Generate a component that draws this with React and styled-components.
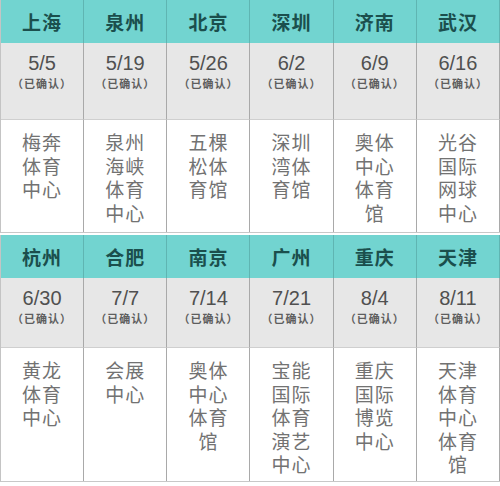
import React from 'react';
import styled, { createGlobalStyle } from 'styled-components';

const sections = [
  {
    dateHeight: 77,
    venueHeight: 112,
    items: [
      { city: '上海', date: '5/5', venue: ['梅奔', '体育', '中心'] },
      { city: '泉州', date: '5/19', venue: ['泉州', '海峡', '体育', '中心'] },
      { city: '北京', date: '5/26', venue: ['五棵', '松体', '育馆'] },
      { city: '深圳', date: '6/2', venue: ['深圳', '湾体', '育馆'] },
      { city: '济南', date: '6/9', venue: ['奥体', '中心', '体育', '馆'] },
      { city: '武汉', date: '6/16', venue: ['光谷', '国际', '网球', '中心'] },
    ],
  },
  {
    dateHeight: 70,
    venueHeight: 133,
    items: [
      { city: '杭州', date: '6/30', venue: ['黄龙', '体育', '中心'] },
      { city: '合肥', date: '7/7', venue: ['会展', '中心'] },
      { city: '南京', date: '7/14', venue: ['奥体', '中心', '体育', '馆'] },
      { city: '广州', date: '7/21', venue: ['宝能', '国际', '体育', '演艺', '中心'] },
      { city: '重庆', date: '8/4', venue: ['重庆', '国际', '博览', '中心'] },
      { city: '天津', date: '8/11', venue: ['天津', '体育', '中心', '体育', '馆'] },
    ],
  },
];

const App = () => {
  return (
    <>
      <GlobalStyle />
      <Page>
        {sections.map((section, i) => (
          <Section key={i}>
            {section.items.map(item => (
              <HeaderCell key={item.city}>{item.city}</HeaderCell>
            ))}
            {section.items.map(item => (
              <DateCell key={item.city} $height={section.dateHeight}>
                <DateText>{item.date}</DateText>
                <Status>（已确认）</Status>
              </DateCell>
            ))}
            {section.items.map(item => (
              <VenueCell key={item.city} $height={section.venueHeight}>
                <VenueText>{item.venue.join('\n')}</VenueText>
              </VenueCell>
            ))}
          </Section>
        ))}
      </Page>
    </>
  );
};

export default App;

const GlobalStyle = createGlobalStyle`
  body {
    margin: 0;
    background: #ffffff;
    font-family: "Noto Sans CJK SC", "Liberation Sans", sans-serif;
  }
`;

const Page = styled.div`
  width: 500px;
  height: 486px;
  background: #ffffff;
  display: flex;
  flex-direction: column;
  gap: 2px;
`;

const Section = styled.div`
  display: grid;
  grid-template-columns: repeat(6, 1fr);
  border-left: 1px solid #c4c4c4;
  border-bottom: 1px solid #c8c8c8;
`;

const HeaderCell = styled.div`
  height: 43px;
  box-sizing: border-box;
  display: flex;
  align-items: center;
  justify-content: center;
  background: #72d4d0;
  border-right: 1px solid #5fb5b2;
  color: #1b4f4d;
  font-size: 19px;
  font-weight: 700;
  letter-spacing: 1px;
`;

const DateCell = styled.div`
  height: ${p => p.$height}px;
  box-sizing: border-box;
  display: flex;
  flex-direction: column;
  align-items: center;
  padding-top: 8px;
  background: #e7e7e7;
  border-right: 1px solid #a9a9a9;
  border-bottom: 1px solid #cfcfcf;
`;

const DateText = styled.div`
  font-family: "Liberation Sans", "Noto Sans CJK SC", sans-serif;
  font-size: 20px;
  line-height: 24px;
  color: #505050;
`;

const Status = styled.div`
  font-size: 11px;
  line-height: 14px;
  font-weight: 700;
  letter-spacing: 1px;
  color: #5e5e5e;
  margin-top: 1px;
`;

const VenueCell = styled.div`
  height: ${p => p.$height}px;
  box-sizing: border-box;
  display: flex;
  flex-direction: column;
  align-items: center;
  padding-top: 10px;
  background: #ffffff;
  border-right: 1px solid #a9a9a9;
`;

const VenueText = styled.div`
  white-space: pre-line;
  text-align: center;
  font-size: 19px;
  line-height: 23.5px;
  letter-spacing: 1px;
  color: #727272;
`;
